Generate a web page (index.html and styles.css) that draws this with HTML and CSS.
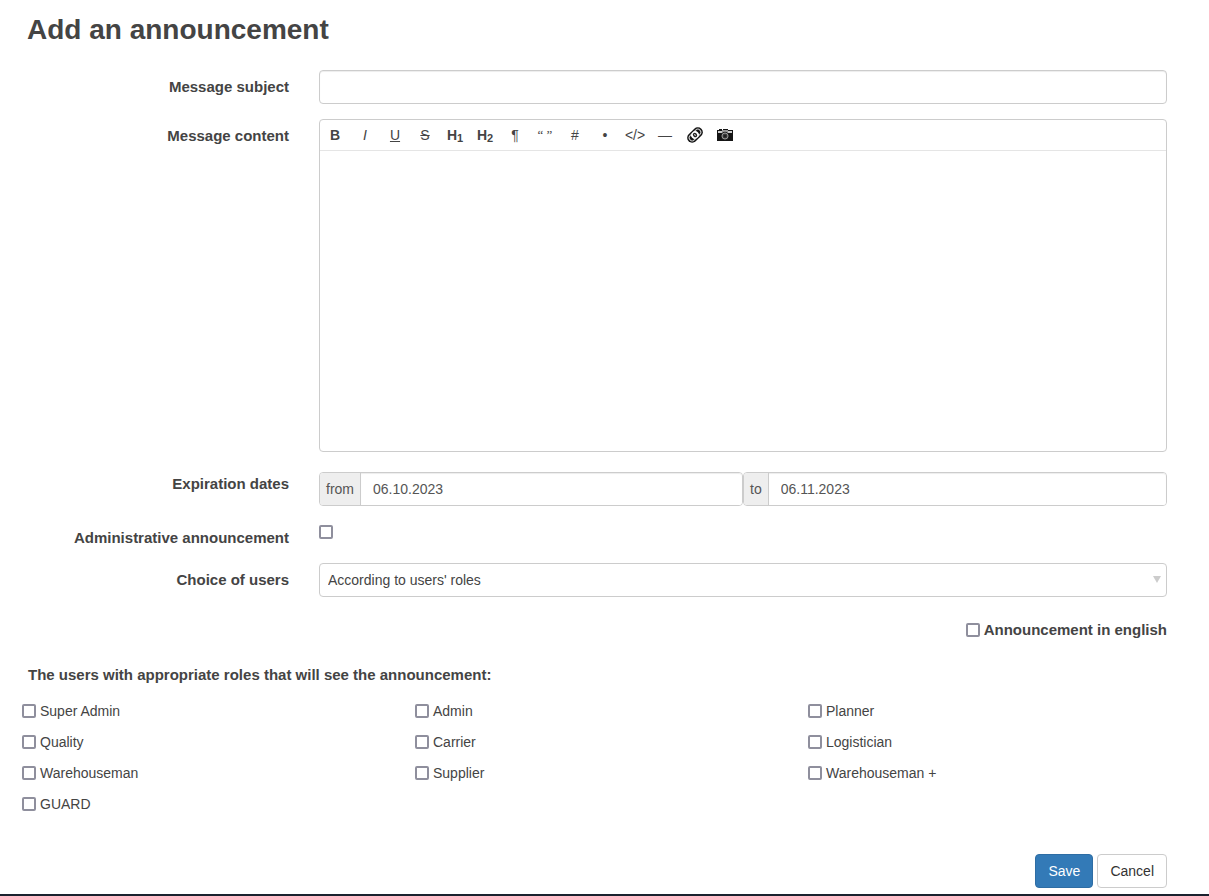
FILE: index.html
```
<!DOCTYPE html>
<html lang="en">
<head>
    <meta charset="UTF-8">
    <meta name="viewport" content="width=device-width, initial-scale=1.0">
    <title>Add an announcement</title>
    <link rel="stylesheet" href="styles.css">
</head>
<body>

    <form class="announcement-form">
        <h1>Add an announcement</h1>

        <div class="form-row">
            <label class="form-label" for="subject">Message subject</label>
            <input class="form-control" type="text" id="subject">
        </div>

        <div class="form-row">
            <label class="form-label" for="content">Message content</label>
            <div class="editor">
                <div class="editor-bar">
                    <button type="button" title="Bold"><b>B</b></button>
                    <button type="button" title="Italic"><i>I</i></button>
                    <button type="button" title="Underline"><u>U</u></button>
                    <button type="button" title="Strike-through"><s>S</s></button>
                    <button type="button" title="Heading 1"><b>H<sub>1</sub></b></button>
                    <button type="button" title="Heading 2"><b>H<sub>2</sub></b></button>
                    <button type="button" title="Paragraph">&#182;</button>
                    <button type="button" class="quote" title="Quote">&#8220; &#8221;</button>
                    <button type="button" title="Ordered list">#</button>
                    <button type="button" title="Unordered list">&#8226;</button>
                    <button type="button" title="Code">&lt;/&gt;</button>
                    <button type="button" title="Horizontal line">&#8213;</button>
                    <button type="button" title="Link">
                        <svg width="18" height="18" viewBox="0 0 18 18" fill="none">
                            <g transform="rotate(-45 9 9)">
                                <rect x="0" y="4" width="18" height="10" rx="5" fill="#111"/>
                                <rect x="2" y="6" width="14" height="6" rx="3" stroke="#ccc" stroke-width="1"/>
                                <ellipse cx="9" cy="9" rx="4" ry="3.6" fill="#fff"/>
                                <ellipse cx="9" cy="9" rx="2" ry="2.4" fill="#222"/>
                                <path d="M9 8v2" stroke="#ddd" stroke-width="1"/>
                            </g>
                        </svg>
                    </button>
                    <button type="button" title="Image">
                        <svg width="18" height="14" viewBox="0 0 18 14">
                            <path d="M1 2h2V1h3v1h1V1h5v1h5v11H1z" fill="#151515"/>
                            <path d="M2 3h14v2H2z" fill="#ccc"/>
                            <path d="M6 2h6v3H6z" fill="#999"/>
                            <circle cx="9" cy="8" r="4.2" fill="#222"/>
                            <circle cx="9" cy="8" r="3" fill="#444" stroke="#999"/>
                            <circle cx="9" cy="8" r="1.6" fill="#222"/>
                        </svg>
                    </button>
                </div>
                <textarea class="editor-content" id="content"></textarea>
            </div>
        </div>

        <div class="form-row">
            <label class="form-label" for="dateFrom">Expiration dates</label>
            <div class="dates">
                <div class="input-group">
                    <label for="dateFrom">from</label>
                    <input type="text" id="dateFrom" value="06.10.2023">
                </div>
                <div class="input-group">
                    <label for="dateTo">to</label>
                    <input type="text" id="dateTo" value="06.11.2023">
                </div>
            </div>
        </div>

        <div class="form-row">
            <label class="form-label" for="administrative">Administrative announcement</label>
            <div class="single-check">
                <input type="checkbox" id="administrative">
            </div>
        </div>

        <div class="form-row">
            <label class="form-label" for="users">Choice of users</label>
            <div class="select-box">
                <select class="form-control" id="users">
                    <option>According to users' roles</option>
                </select>
                <svg class="select-arrow" width="8" height="7" viewBox="0 0 8 7"><path d="M0 0h8L4 7z" fill="#ccc"/></svg>
            </div>
        </div>

        <div class="english">
            <label class="check"><input type="checkbox" id="english">Announcement in english</label>
        </div>

        <h2>The users with appropriate roles that will see the announcement:</h2>

        <div class="roles">
            <label class="check"><input type="checkbox">Super Admin</label>
            <label class="check"><input type="checkbox">Admin</label>
            <label class="check"><input type="checkbox">Planner</label>
            <label class="check"><input type="checkbox">Quality</label>
            <label class="check"><input type="checkbox">Carrier</label>
            <label class="check"><input type="checkbox">Logistician</label>
            <label class="check"><input type="checkbox">Warehouseman</label>
            <label class="check"><input type="checkbox">Supplier</label>
            <label class="check"><input type="checkbox">Warehouseman +</label>
            <label class="check"><input type="checkbox">GUARD</label>
        </div>

        <div class="form-actions">
            <button type="submit" class="btn btn-primary">Save</button>
            <button type="button" class="btn">Cancel</button>
        </div>
    </form>

    <footer class="page-footer"></footer>

</body>
</html>
```
FILE: styles.css
```
* {
    box-sizing: border-box;
}
body {
    margin: 0;
    background-color: #fff;
    color: #444;
    font-family: Arial, "Liberation Sans", sans-serif;
    font-size: 14px;
    line-height: 20px;
}
input, select, textarea, button {
    font: inherit;
    color: inherit;
}
h1 {
    margin: 0 0 25px 5px;
    font-size: 28px;
    line-height: 30px;
}
h2 {
    margin: 25px 0 16px 6px;
    font-size: 15px;
    line-height: 20px;
}

.announcement-form {
    padding: 15px 42px 6px 22px;
}
.form-row {
    display: grid;
    grid-template-columns: 267px 1fr;
    column-gap: 30px;
    align-items: start;
    margin-bottom: 15px;
}
.form-label {
    padding-top: 7px;
    font-size: 15px;
    font-weight: bold;
    text-align: right;
}
.form-control {
    width: 100%;
    height: 34px;
    padding: 6px 12px;
    border: 1px solid #ccc;
    border-radius: 4px;
    background-color: #fff;
    box-shadow: inset 0 1px 1px rgba(0, 0, 0, 0.075);
}

.editor {
    border: 1px solid #ccc;
    border-radius: 4px;
}
.editor-bar {
    display: flex;
    border-bottom: 1px solid #e5e5e5;
}
.editor-bar button {
    display: flex;
    align-items: center;
    justify-content: center;
    width: 30px;
    height: 30px;
    padding: 0;
    border: none;
    background: none;
    white-space: nowrap;
    cursor: pointer;
}
.editor-bar sub {
    font-size: 11px;
    line-height: 0;
    vertical-align: -2px;
}
.editor-bar .quote {
    font-family: "Liberation Serif", serif;
    font-size: 13px;
}
.editor-content {
    display: block;
    width: 100%;
    height: 300px;
    padding: 10px;
    border: none;
    border-radius: 4px;
    background: none;
    resize: none;
}

.dates {
    display: flex;
    margin-top: 5px;
}
.input-group {
    display: flex;
    flex: 1;
    height: 34px;
    border: 1px solid #ccc;
    border-radius: 4px;
    color: #555;
}
.input-group label {
    padding: 6px;
    border-right: 1px solid #ccc;
    border-radius: 3px 0 0 3px;
    background-color: #eee;
}
.input-group input {
    flex: 1;
    min-width: 0;
    padding: 6px 12px;
    border: none;
    border-radius: 0 3px 3px 0;
    box-shadow: inset 0 1px 1px rgba(0, 0, 0, 0.075);
}

input[type="checkbox"] {
    appearance: none;
    flex: none;
    width: 14px;
    height: 14px;
    margin: 0;
    border: 2px solid #8f8f9d;
    border-radius: 2px;
    background-color: #fff;
}
input[type="checkbox"]:checked {
    border-color: #337ab7;
    background-color: #337ab7;
}
.single-check {
    display: flex;
    padding-top: 4px;
}

.select-box {
    position: relative;
}
.select-box select {
    appearance: none;
    padding: 6px 8px;
    box-shadow: none;
}
.select-arrow {
    position: absolute;
    top: 13px;
    right: 6px;
    pointer-events: none;
}

.check {
    display: flex;
    align-items: center;
    gap: 4px;
}
.english {
    display: flex;
    justify-content: flex-end;
    margin-top: 23px;
    font-size: 15px;
    font-weight: bold;
}
.roles {
    display: grid;
    grid-template-columns: repeat(3, 1fr);
    row-gap: 11px;
    margin-right: -34px;
}

.form-actions {
    display: flex;
    justify-content: flex-end;
    gap: 4px;
    margin-top: 40px;
}
.btn {
    padding: 6px 12px;
    border: 1px solid #ccc;
    border-radius: 4px;
    background-color: #fff;
    color: #333;
    cursor: pointer;
}
.btn-primary {
    border-color: #2e6da4;
    background-color: #337ab7;
    color: #fff;
}

.page-footer {
    height: 2px;
    background-color: #1a222e;
}
```
